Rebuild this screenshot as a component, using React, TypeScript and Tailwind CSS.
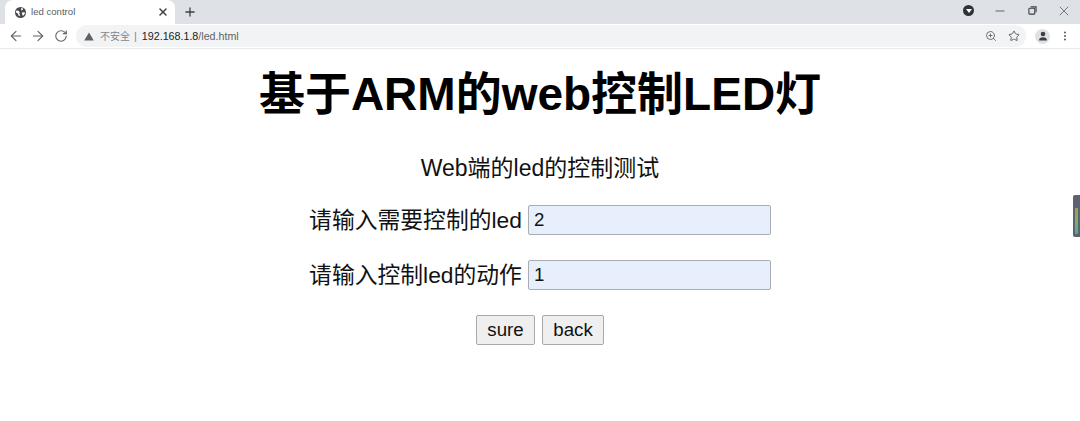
import { ArrowLeft, ArrowRight, RotateCw, Plus, X, Minus, Star, ZoomIn, EllipsisVertical } from "lucide-react";

const SANS = "font-['Liberation_Sans','Noto_Sans_CJK_SC',sans-serif]";

function Globe() {
  return (
    <svg width="11" height="11" viewBox="0 0 16 16">
      <circle cx="8" cy="8" r="8" fill="#45494e" />
      <path d="M2 5l3 .5 2 2-1 1.500 1 1.500v3l-2-1-1-3-3-2zM9 1l3 1.500-1 2-2 .5zM10 8l4-.5.5 2-3 3.500-1-2z" fill="#fff" />
    </svg>
  );
}

function TopBar() {
  return (
    <div className="h-[24px] bg-[#dee1e6] flex items-end pl-[5px] shrink-0">
      <div className="w-[170px] h-[24px] bg-white rounded-t-[8px] flex items-center pl-[10px] pr-[6px]">
        <Globe />
        <span className="ml-[5px] text-[9.600px] text-[#5a5e63] flex-1">led control</span>
        <X size={12} strokeWidth={3} className="text-[#3c4043]" />
      </div>
      <div className="ml-[8px] h-[24px] flex items-center">
        <Plus size={14} strokeWidth={2.2} className="text-[#3c4043]" />
      </div>
      <div className="ml-auto h-[24px] flex items-center pb-[3px]">
        <div className="w-[11px] h-[11px] rounded-full bg-[#2f3237] flex items-center justify-center">
          <div className="w-0 h-0 border-l-[3px] border-r-[3px] border-t-[4px] border-l-transparent border-r-transparent border-t-white" />
        </div>
        <Minus size={14} strokeWidth={1.300} className="ml-[19px] text-[#3c4043]" />
        <svg width="9" height="9" viewBox="0 0 10 10" className="ml-[21px]" fill="none" stroke="#3c4043" strokeWidth="1.200">
          <rect x="1" y="2.500" width="6.500" height="6.500" rx="0.800" />
          <path d="M3 1h6v6" />
        </svg>
        <X size={16} strokeWidth={1} className="ml-[19px] mr-[8px] text-[#3c4043]" />
      </div>
    </div>
  );
}

function Toolbar() {
  return (
    <div className="h-[25px] bg-white flex items-center border-b border-[#e8eaed] shrink-0">
      <ArrowLeft size={16} strokeWidth={1.700} className="ml-[8px] text-[#5f6368]" />
      <ArrowRight size={16} strokeWidth={1.700} className="ml-[6px] text-[#5f6368]" />
      <RotateCw size={14} strokeWidth={1.900} className="ml-[8px] text-[#5f6368]" />
      <div className="ml-[8px] w-[950px] h-[22px] bg-[#f1f3f4] rounded-full flex items-center pl-[8px]">
        <svg width="10" height="9" viewBox="0 0 11 10">
          <path d="M5.500 0.500L10.800 9.500H0.200z" fill="#5f6368" />
        </svg>
        <span className="ml-[6px] text-[10px] text-[#80868b]">不安全</span>
        <span className="ml-[4px] text-[11px] text-[#80868b]">|</span>
        <span className="ml-[5px] text-[10.700px] text-[#202124]">192.168.1.8<span className="text-[#5f6368]">/led.html</span></span>
        <ZoomIn size={12} strokeWidth={1.800} className="ml-auto text-[#5f6368]" />
        <Star size={12} strokeWidth={2} className="ml-[11px] mr-[6px] text-[#5f6368]" />
      </div>
      <div className="ml-[9px] w-[15px] h-[15px] rounded-full bg-[#dfe1e5] flex items-center justify-center">
        <svg width="10" height="10" viewBox="0 0 10 10" fill="#3c4043">
          <circle cx="5" cy="3" r="2.300" />
          <path d="M1 9.500c0-2.500 1.800-3.300 4-3.300s4 .8 4 3.300z" />
        </svg>
      </div>
      <EllipsisVertical size={12} strokeWidth={2.200} className="ml-[9px] text-[#5f6368]" />
    </div>
  );
}

function Field({ label, value }: { label: string; value: string }) {
  return (
    <div className="flex items-center justify-center h-[30px] text-[22.800px] text-[#111]">
      <span className="leading-[30px]">{label}</span>
      <input
        readOnly
        value={value}
        className="ml-[6px] w-[243px] h-[30px] bg-[#e8effc] border border-[#a9acb3] rounded-[2px] pl-[5px] text-[18.700px] text-[#111] outline-none"
      />
    </div>
  );
}

export default function App() {
  return (
    <div className={`relative w-[1080px] h-[421px] overflow-hidden bg-white flex flex-col ${SANS}`}>
      <TopBar />
      <Toolbar />
      <div className="flex flex-col items-center">
        <h1 className="mt-[16px] h-[58px] leading-[58px] text-[46px] font-bold text-black">基于ARM的web控制LED灯</h1>
        <p className="mt-[30px] h-[30px] leading-[30px] text-[23px] text-[#111]">Web端的led的控制测试</p>
        <div className="mt-[22px] flex flex-col gap-[25px]">
          <Field label="请输入需要控制的led" value="2" />
          <Field label="请输入控制led的动作" value="1" />
        </div>
        <div className="mt-[25px] flex gap-[7px]">
          <button className="w-[59px] h-[30px] bg-[#efefef] border border-[#a9a9a9] rounded-[2px] text-[18.700px] text-[#111]">sure</button>
          <button className="w-[62px] h-[30px] bg-[#efefef] border border-[#a9a9a9] rounded-[2px] text-[18.700px] text-[#111]">back</button>
        </div>
      </div>
      <div className="absolute right-0 top-[195px] w-[7px] h-[42px] bg-[#5b6270] rounded-l-[2px] flex flex-col justify-end items-center pb-[3px]">
        <div className="w-[3px] h-[26px] bg-gradient-to-b from-[#a89a4a] via-[#7fae6a] to-[#3fae9a]" />
      </div>
    </div>
  );
}
